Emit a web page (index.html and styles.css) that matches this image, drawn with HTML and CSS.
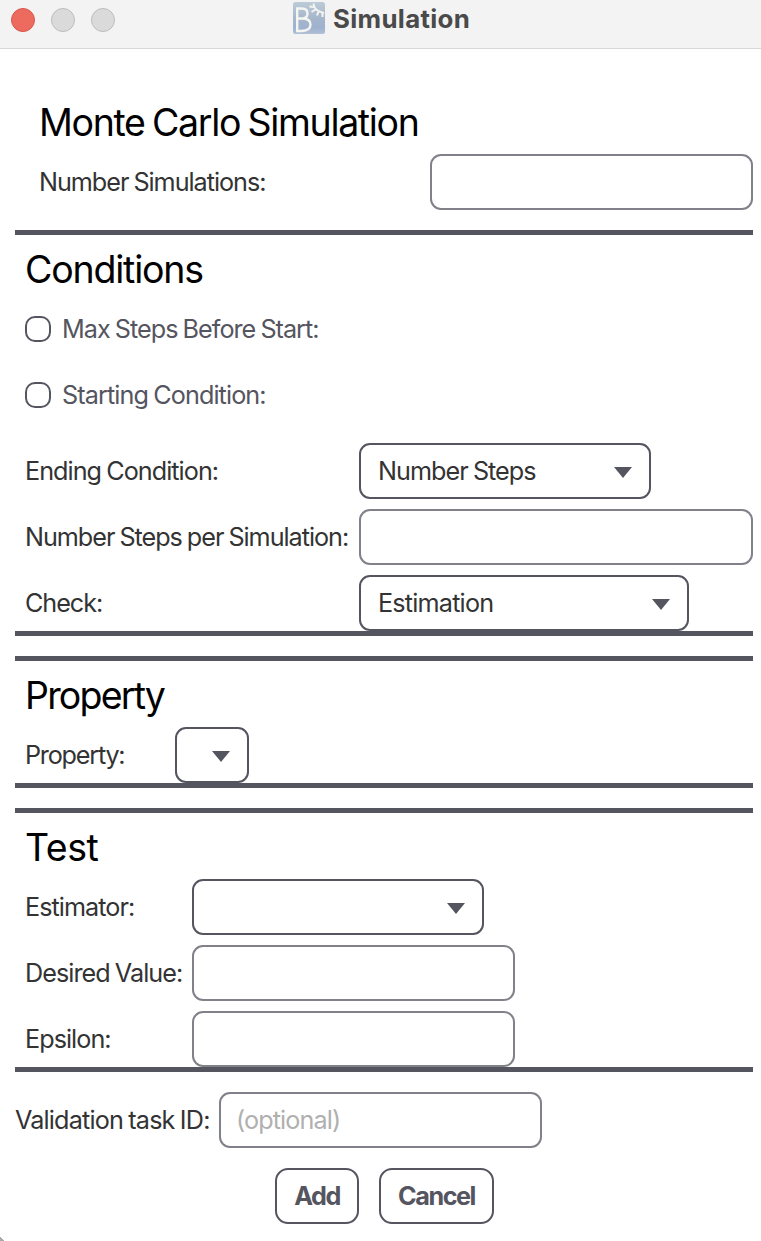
FILE: index.html
```html
<!DOCTYPE html>
<html lang="en">
<head>
<meta charset="utf-8">
<title>Simulation</title>
<link rel="stylesheet" href="styles.css">
</head>
<body>
<div class="window">
  <header class="titlebar">
    <div class="lights">
      <span class="light light-close"></span>
      <span class="light"></span>
      <span class="light"></span>
    </div>
    <div class="title">
      <svg class="app-icon" width="32" height="32" viewBox="0 0 32 32">
        <defs>
          <linearGradient id="sky" x1="0" y1="0" x2="0" y2="1">
            <stop offset="0" stop-color="#bccbd7"/>
            <stop offset=".55" stop-color="#a4b5cb"/>
            <stop offset=".8" stop-color="#9eb1cf"/>
            <stop offset="1" stop-color="#b0c0d4"/>
          </linearGradient>
        </defs>
        <rect width="32" height="32" rx="2.5" fill="url(#sky)"/>
        <g fill="none" stroke="#f4f5f1" stroke-width="2.400">
          <path d="M3 6.500H9q5.500 0 5.500 5t-5.500 5H4M9 16.500q8.500 0 8.500 6T9 29H3M4.200 6v23.500"/>
          <path d="M20.500 1.500q.5 7.500 10.500 9.500" stroke-width="2"/>
          <path d="M21 5l-4.500-.5M22.500 7.500l-4 2.500M25.500 9.500l-1.500 4M29.500 10.500v4.500" stroke-width="2"/>
        </g>
      </svg>
      <h1 class="title-text">Simulation</h1>
    </div>
  </header>

  <main class="content">
    <section class="section section-main">
      <h2 class="heading h-monte">Monte Carlo Simulation</h2>
      <div class="row">
        <span class="label t-numsim">Number Simulations:</span>
        <span class="field"></span>
      </div>
    </section>

    <section class="section ruled-top ruled-bottom conditions">
      <h2 class="heading">Conditions</h2>
      <div class="row check-row"><span class="checkbox"></span><span class="t-max">Max Steps Before Start:</span></div>
      <div class="row check-row"><span class="checkbox"></span><span>Starting Condition:</span></div>
      <div class="row row-spaced"><span class="label t-end">Ending Condition:</span><span class="combo"><span class="t-end">Number Steps</span><svg class="arrow" viewBox="0 0 18 11"><path d="M0 0h18L9 11z"/></svg></span></div>
      <div class="row"><span class="label t-per">Number Steps per Simulation:</span><span class="field field-wide"></span></div>
      <div class="row"><span class="label t-check">Check:</span><span class="combo combo-wide"><span class="t-est">Estimation</span><svg class="arrow" viewBox="0 0 18 11"><path d="M0 0h18L9 11z"/></svg></span></div>
    </section>

    <section class="section ruled-top ruled-bottom property">
      <h2 class="heading h-prop">Property</h2>
      <div class="row"><span class="label t-prop">Property:</span><span class="combo combo-small"><svg class="arrow" viewBox="0 0 18 11"><path d="M0 0h18L9 11z"/></svg></span></div>
    </section>

    <section class="section ruled-top ruled-bottom test">
      <h2 class="heading h-test">Test</h2>
      <div class="row"><span class="label t-tight">Estimator:</span><span class="combo"><svg class="arrow" viewBox="0 0 18 11"><path d="M0 0h18L9 11z"/></svg></span></div>
      <div class="row"><span class="label t-tight">Desired Value:</span><span class="field"></span></div>
      <div class="row"><span class="label t-tight">Epsilon:</span><span class="field"></span></div>
    </section>

    <div class="row task-row">
      <span class="label t-val">Validation task ID:</span>
      <span class="field"><span class="placeholder">(optional)</span></span>
    </div>

    <div class="buttons">
      <button class="button b-add">Add</button>
      <button class="button b-cancel">Cancel</button>
    </div>
  </main>
  <span class="corner"></span>
</div>
</body>
</html>
```
FILE: styles.css
```css
* { box-sizing: border-box; }

body {
  margin: 0;
  background: #fff;
  font-family: Inter, "Liberation Sans", sans-serif;
  font-size: 25.2px;
  letter-spacing: -0.9px;
  word-spacing: -1px;
  color: #333;
}

.window { position: relative; width: 761px; height: 1241px; overflow: hidden; }

.titlebar {
  display: grid;
  grid-template-columns: 293px auto;
  height: 49px;
  padding-bottom: 8px;
  background: #f3f3f3;
  border-bottom: 1px solid #d8d8d8;
}
.lights { display: flex; align-items: center; gap: 16px; padding-left: 11px; }
.light { width: 24px; height: 24px; border: 1px solid #bdbdbd; border-radius: 50%; background: #dadada; }
.light-close { background: #ed6a5e; border-color: #d8564c; }
.title { display: flex; align-items: flex-start; gap: 8px; padding-top: 2px; }
.app-icon { flex: none; }
.title-text { margin: 0; font-size: 25.8px; line-height: 34px; font-weight: 700; letter-spacing: 0.33px; color: #4a4a4a; }

.content { display: flex; flex-direction: column; padding: 39px 8px 0 15px; }

.section { display: flex; flex-direction: column; gap: 10px; padding-left: 10px; margin-bottom: 20px; }
.section-main { padding-left: 25px; --label: 390px; }
.conditions { --label: 334px; }
.property { --label: 150px; }
.test { --label: 167px; }
.ruled-top { border-top: 5px solid #555560; }
.ruled-bottom { border-bottom: 5px solid #555560; }

.heading { margin: 0; height: 56px; padding-top: 13px; font-size: 37.5px; line-height: 43px; font-weight: 400; letter-spacing: -1.2px; color: #000; white-space: nowrap; }
.h-monte { letter-spacing: -1.33px; word-spacing: -1.8px; text-indent: -1px; }
.h-prop { letter-spacing: -1.8px; }
.h-test { letter-spacing: -0.5px; }

.row { display: flex; align-items: center; height: 56px; white-space: nowrap; }
.row-spaced { margin-top: 10px; }
.label { width: var(--label); flex: none; }
.check-row { gap: 11px; color: #555560; }
.checkbox { width: 26px; height: 26px; border: 2px solid #555560; border-radius: 10px; }

.t-numsim { letter-spacing: -1.03px; text-indent: -1px; }
.t-max { letter-spacing: -0.98px; }
.t-end { letter-spacing: -0.96px; }
.t-per { letter-spacing: -1.03px; }
.t-check { letter-spacing: -1.05px; }
.t-est { letter-spacing: -0.8px; }
.t-prop { letter-spacing: -1.22px; }
.t-tight { letter-spacing: -0.96px; }
.t-val { letter-spacing: -0.83px; }

.field { display: flex; align-items: center; width: 323px; height: 56px; padding: 0 15px; border: 2px solid #81818a; border-radius: 11px; background: #fff; }
.field-wide { width: 394px; }
.combo { display: flex; align-items: center; width: 292px; height: 56px; padding: 0 17px; border: 2px solid #555560; border-radius: 11px; background: #fff; }
.combo-wide { width: 330px; }
.combo-small { width: 74px; }
.arrow { width: 18px; height: 11px; margin: 3px 0 0 auto; fill: #555560; }

.task-row { --label: 204px; }
.placeholder { color: #b0b0b0; }

.buttons { display: flex; justify-content: center; gap: 20px; padding-top: 20px; }
.button { height: 56px; padding: 0; border: 2px solid #555560; border-radius: 13px; background: #fff; font: 700 25.2px Inter, "Liberation Sans", sans-serif; letter-spacing: -1.45px; text-indent: 1px; color: #555560; }
.b-add { width: 84px; }
.b-cancel { width: 115px; }

.corner { position: absolute; left: 0; bottom: 0; width: 4px; height: 4px; background: linear-gradient(45deg, #aaa 50%, transparent 51%); }
```
